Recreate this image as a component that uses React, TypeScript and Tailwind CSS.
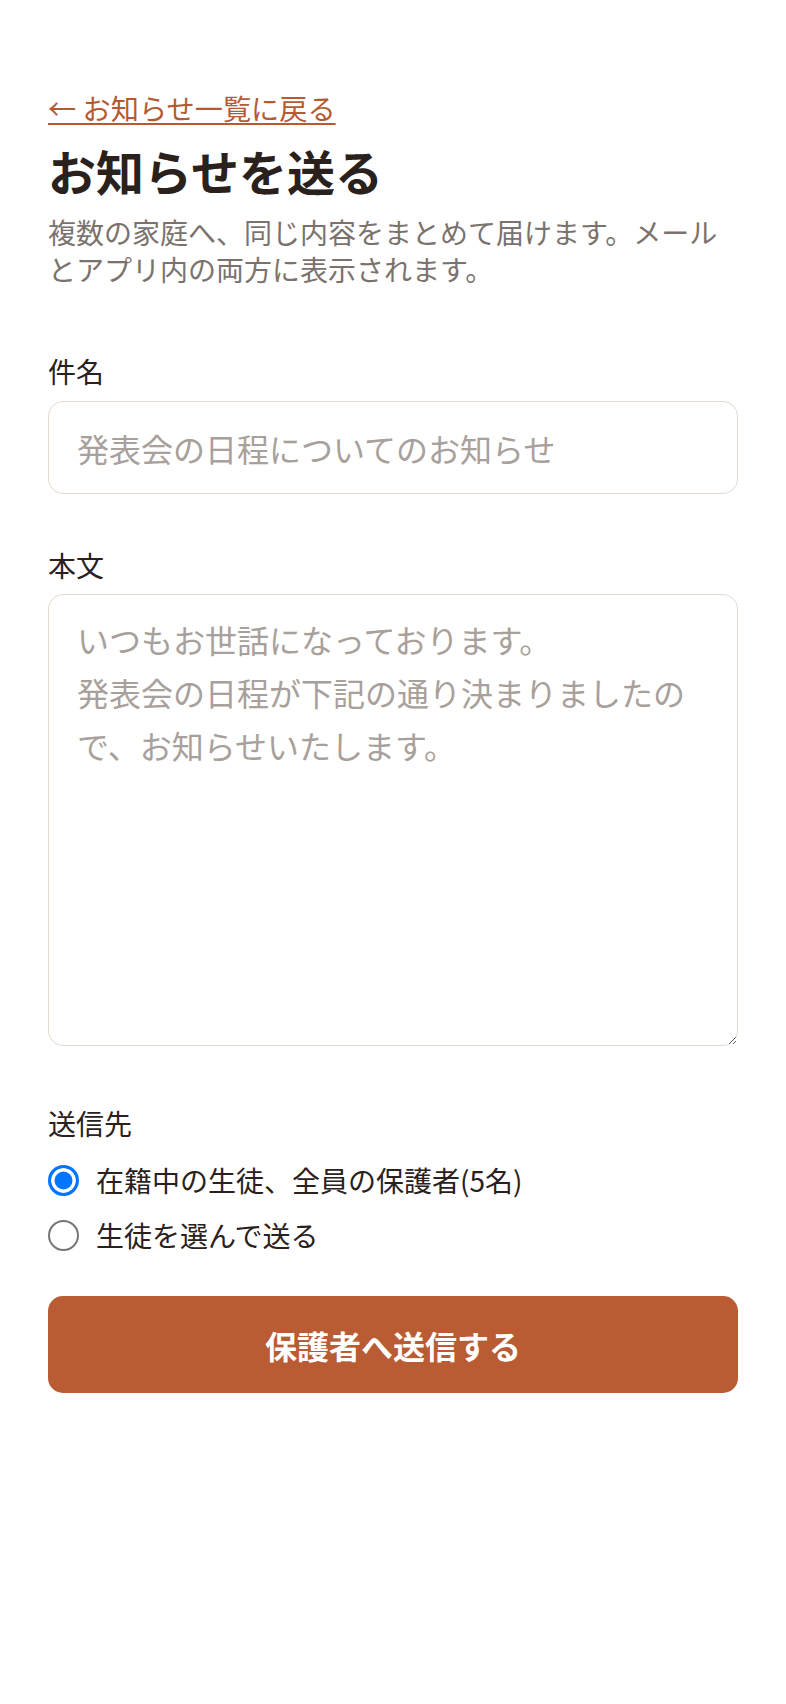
import React from "react";

export default function App() {
  return (
    <div className="min-h-[1704px] bg-white px-[48px] pt-[89px] font-['Noto_Sans_CJK_JP','Noto_Sans',sans-serif] text-[#2a211d]">
      <a href="#" className="block w-fit text-[28.2px] leading-[38px] text-[#b65a33] underline decoration-[1.5px] underline-offset-[3px]">
        ← お知らせ一覧に戻る
      </a>
      <h1 className="mt-[12px] text-[48px] font-bold leading-[62px] text-[#2a211d]">お知らせを送る</h1>
      <p className="mt-[13px] text-[28px] leading-[37px] text-[#7b726d]">
        複数の家庭へ、同じ内容をまとめて届けます。メールとアプリ内の両方に表示されます。
      </p>

      <label className="mt-[63px] block text-[28px] leading-[40px]">件名</label>
      <input
        type="text"
        placeholder="発表会の日程についてのお知らせ"
        className="mt-[10px] block h-[93px] w-full rounded-[15px] border-[1.5px] border-[#e3d9cf] bg-white px-[28px] text-[32px] outline-none placeholder:text-[#a8a09b]"
      />

      <label className="mt-[51px] block text-[28px] leading-[40px]">本文</label>
      <textarea
        placeholder={"いつもお世話になっております。\n発表会の日程が下記の通り決まりましたので、お知らせいたします。"}
        className="mt-[9px] block h-[452px] w-full rounded-[15px] border-[1.5px] border-[#e3d9cf] bg-white px-[28px] py-[18px] text-[32px] leading-[53px] outline-none placeholder:text-[#a8a09b]"
      />

      <div className="mt-[57px] text-[28px] leading-[40px]">送信先</div>
      <div className="mt-[17px] flex flex-col gap-[15px]">
        <label className="flex h-[40px] items-center gap-[17px] text-[28px]">
          <input
            type="radio"
            name="to"
            defaultChecked
            className="m-0 h-[31px] w-[31px] shrink-0 appearance-none rounded-full border-[2px] border-[#767676] bg-white checked:border-[3px] checked:border-[#0075ff] checked:bg-[#0075ff] checked:shadow-[inset_0_0_0_3.5px_#ffffff]"
          />
          在籍中の生徒、全員の保護者(5名)
        </label>
        <label className="flex h-[40px] items-center gap-[17px] text-[28px]">
          <input
            type="radio"
            name="to"
            className="m-0 h-[31px] w-[31px] shrink-0 appearance-none rounded-full border-[2px] border-[#767676] bg-white checked:border-[3px] checked:border-[#0075ff] checked:bg-[#0075ff] checked:shadow-[inset_0_0_0_3.5px_#ffffff]"
          />
          生徒を選んで送る
        </label>
      </div>

      <button className="mt-[41px] flex h-[97px] w-full items-center justify-center rounded-[15px] bg-[#b95c34] text-[32px] font-bold text-white">
        保護者へ送信する
      </button>
    </div>
  );
}
